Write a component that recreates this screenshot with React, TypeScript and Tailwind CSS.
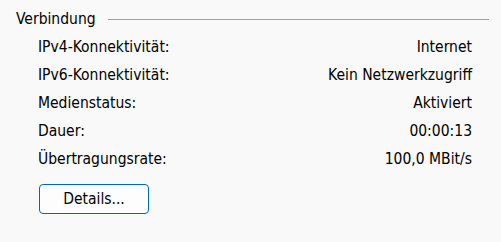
export default function App() {
  const rows: [string, string][] = [
    ["IPv4-Konnektivität:", "Internet"],
    ["IPv6-Konnektivität:", "Kein Netzwerkzugriff"],
    ["Medienstatus:", "Aktiviert"],
    ["Dauer:", "00:00:13"],
    ["Übertragungsrate:", "100,0 MBit/s"],
  ];
  return (
    <div
      className="w-[501px] h-[242px] bg-[#f9f9f9] text-[#000] text-[15.5px] overflow-hidden"
      style={{ fontFamily: "'DejaVu Sans Condensed', 'DejaVu Sans', sans-serif" }}
    >
      <div className="flex items-center pl-[16px] pr-[12px] pt-[10px] h-[28px]">
        <span className="leading-[20px]">Verbindung</span>
        <div className="flex-1 h-px bg-[#a0a0a0] ml-[12px]" />
      </div>
      <div className="pl-[38px] pr-[29px] pt-[5px]">
        {rows.map(([l, v]) => (
          <div key={l} className="flex justify-between h-[28px] leading-[28px]">
            <span>{l}</span>
            <span>{v}</span>
          </div>
        ))}
      </div>
      <div className="pl-[39px] pt-[11px]">
        <button className="w-[110px] h-[30px] border border-[#0067c0] rounded-[4px] bg-[#fdfdfd] text-[15.5px] leading-[28px]">
          Details...
        </button>
      </div>
    </div>
  );
}
